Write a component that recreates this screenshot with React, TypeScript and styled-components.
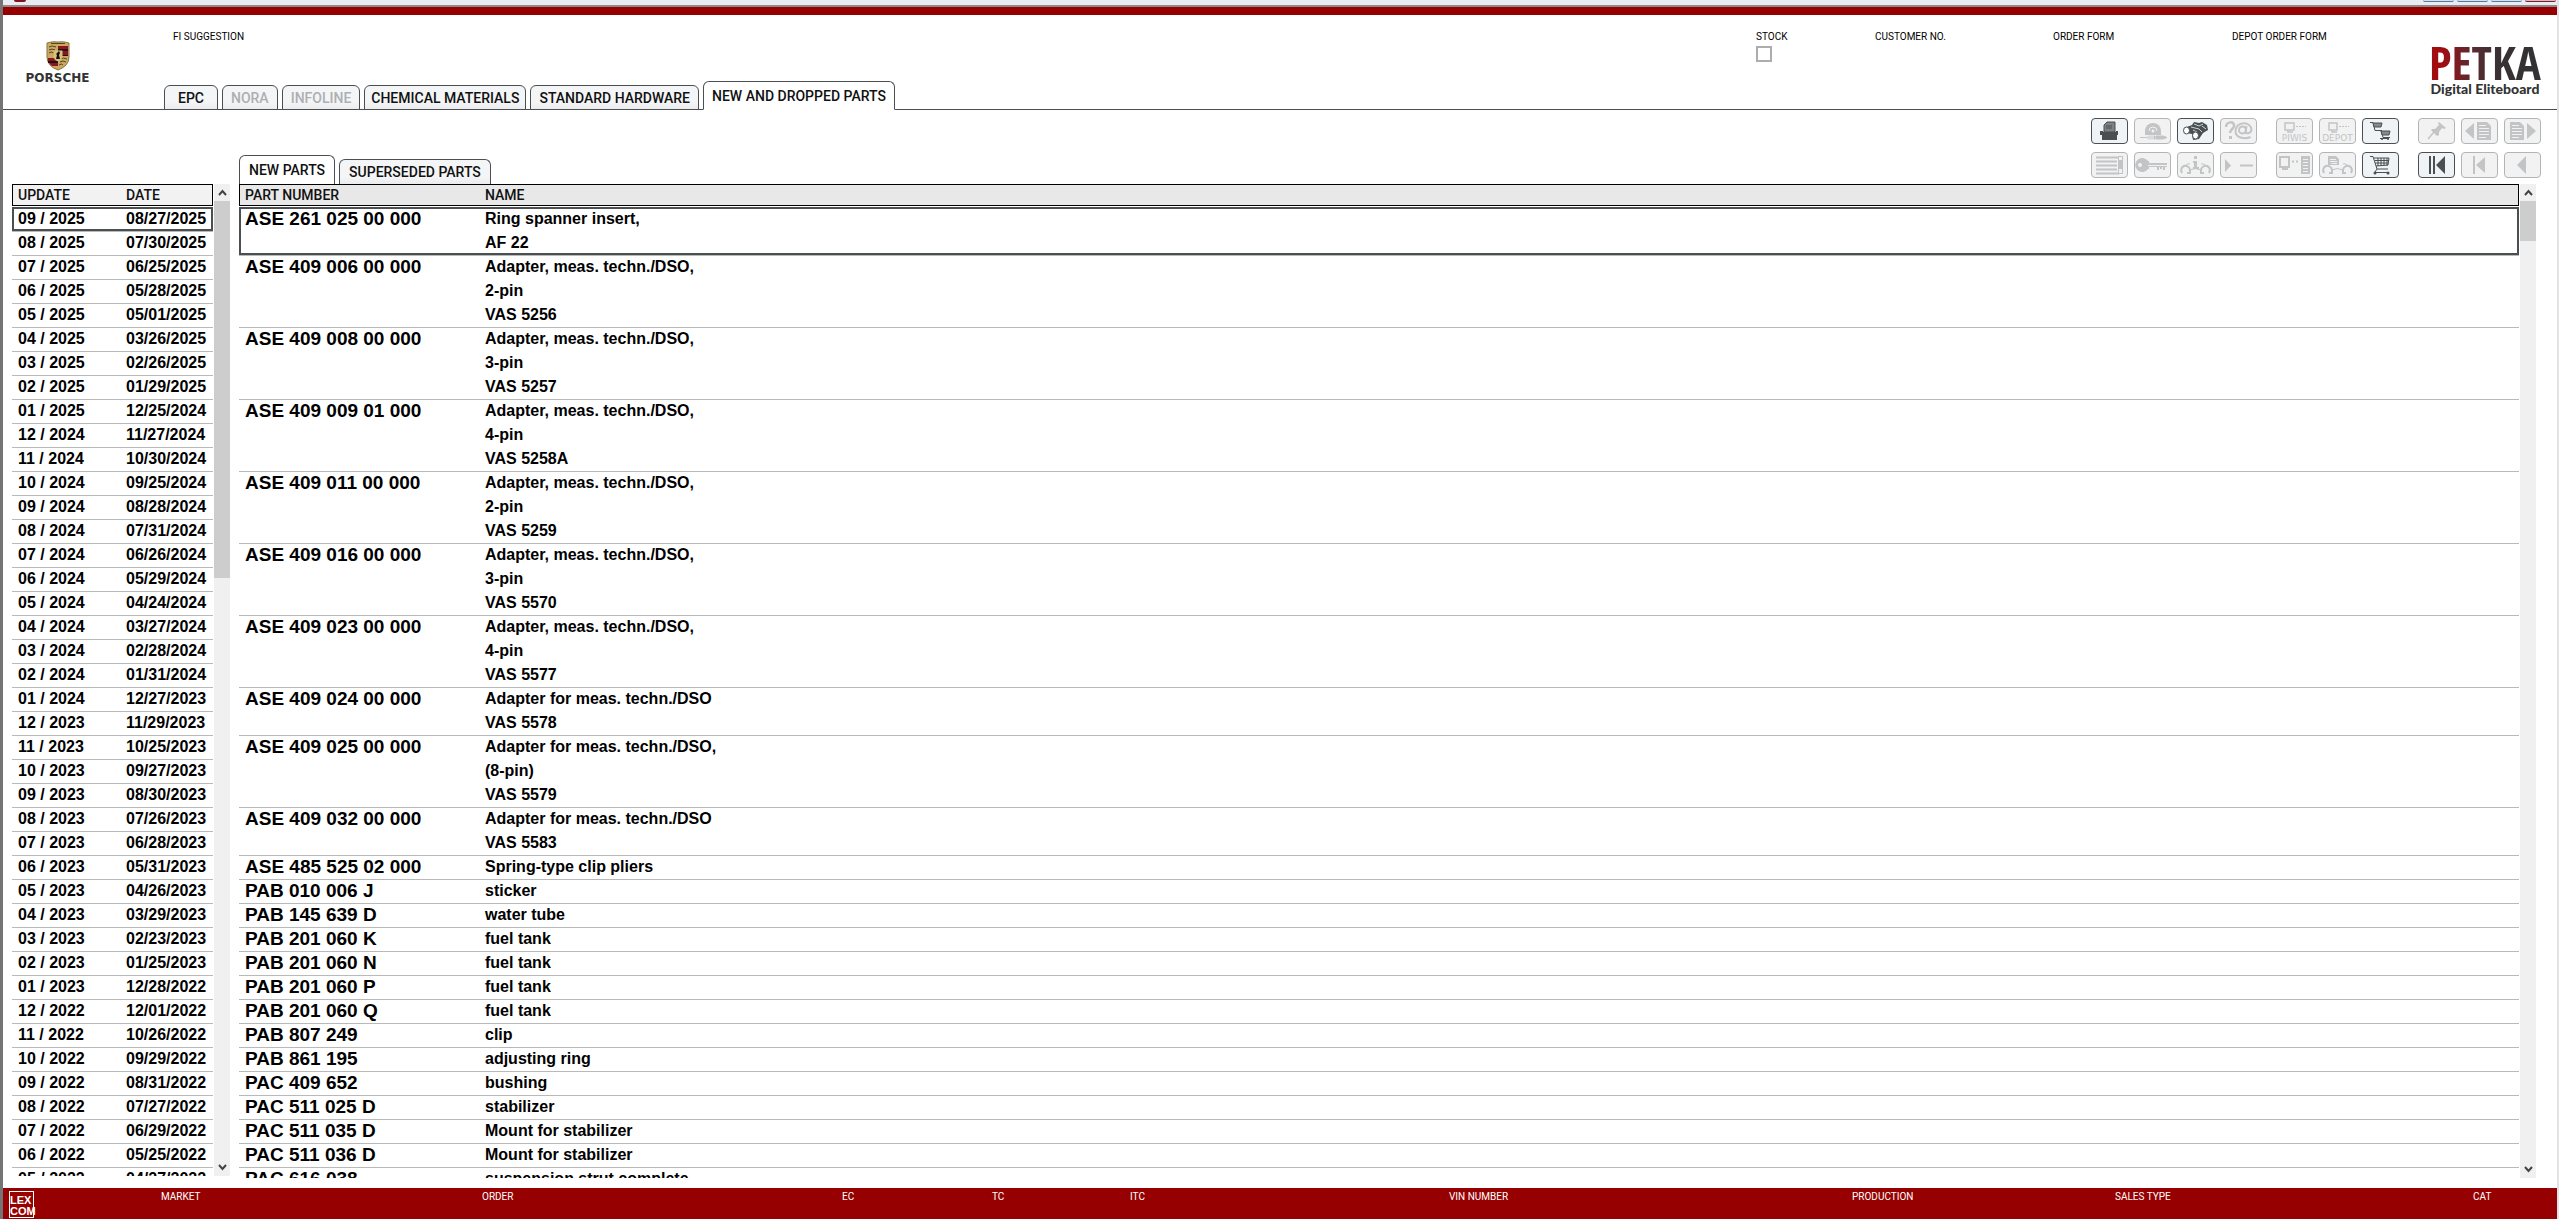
import React from 'react';
import styled, { createGlobalStyle, css } from 'styled-components';

const ink = '#4a4f51';
const pale = '#c2c4c5';
const brand = '#970000';

const GlobalStyle = createGlobalStyle`
  *, *::before, *::after { box-sizing: border-box; }
  body { margin: 0; background: #fff; color: #000; font-family: "Liberation Sans", Arial, sans-serif; }
  button, input { font: inherit; margin: 0; }
`;

const Window = styled.div`
  display: flex;
  flex-direction: column;
  height: 100vh;
  border-left: 3px solid #747474;
  border-right: 2px solid #e2e2e4;
  overflow: hidden;
`;

const TitleBar = styled.div`
  display: flex;
  flex: none;
  align-items: flex-start;
  justify-content: space-between;
  height: 7px;
  padding: 0 1px 0 11px;
  background: #e9ebf2;
  border-bottom: 2px solid #8f8888;
`;

const AppDot = styled.span`
  width: 12px;
  height: 2px;
  border-radius: 0 0 6px 6px;
  background: #7d1420;
`;

const WindowButtons = styled.div`
  display: flex;
  gap: 3px;
`;

const WindowButton = styled.button<{ $close?: boolean }>`
  width: 31px;
  height: 2px;
  padding: 0;
  border: 0;
  border-bottom: 1px solid ${p => (p.$close ? '#6d2430' : '#5c7796')};
  border-radius: 0 0 3px 3px;
  background: ${p => (p.$close ? '#e0b4b8' : '#cfe0f2')};
`;

const Header = styled.header`
  display: flex;
  flex: none;
  height: 103px;
  border-top: 8px solid ${brand};
  border-bottom: 1px solid ${ink};
`;

const BrandMark = styled.div`
  display: flex;
  flex-direction: column;
  align-items: center;
  width: 161px;
  padding: 26px 52px 0 0;
`;

const Wordmark = styled.span`
  font: bold 12px/14px "DejaVu Sans", sans-serif;
  color: #333;
`;

const HeaderMain = styled.div`
  display: flex;
  flex: 1;
  flex-direction: column;
  justify-content: space-between;
`;

const Caption = styled.span`
  font: 10px/12px Roboto, "Liberation Sans", sans-serif;
  white-space: nowrap;
`;

const HeaderCaption = styled(Caption)`
  padding: 16px 0 0 9px;
`;

const TabList = styled.div`
  display: flex;
  align-items: flex-end;
  gap: 4px;
`;

const Tab = styled.button<{ $active?: boolean; $pad?: number }>`
  height: ${p => (p.$active ? 29 : 25)}px;
  margin-bottom: -1px;
  padding: 0 ${p => p.$pad ?? 8}px;
  border: 1px solid ${ink};
  border-bottom-color: ${p => (p.$active ? '#fff' : ink)};
  border-radius: 6px 6px 0 0;
  background: ${p => (p.$active ? '#fff' : 'linear-gradient(#f4f5f6 70%, #ececee)')};
  color: #111;
  font: 500 14px/20px Roboto, "Liberation Sans", sans-serif;
  white-space: nowrap;
  &:disabled { color: #adafb1; }
`;

const Field = styled.label<{ $width: number }>`
  display: flex;
  flex: none;
  flex-direction: column;
  align-items: flex-start;
  gap: 3px;
  width: ${p => p.$width}px;
  padding-top: 16px;
`;

const CheckBox = styled.input`
  appearance: none;
  width: 16px;
  height: 16px;
  border: 2px solid #adadad;
  background: #fff;
`;

const Product = styled.div`
  display: flex;
  flex-direction: column;
  align-items: center;
  width: 110px;
  margin-right: 17px;
  padding-top: 27px;
`;

const ProductName = styled.span`
  background: linear-gradient(90deg, #a00c10 12%, #5a2b30 38%, #3a3133 62%, #303234);
  background-clip: text;
  color: transparent;
  font: bold 47px/40px "Liberation Sans Narrow", "Open Sans Condensed", "Liberation Sans", sans-serif;
`;

const ProductLine = styled.span`
  color: #333;
  font: 900 14px/14px Lato, sans-serif;
  white-space: nowrap;
`;

const Body = styled.main`
  display: flex;
  flex: 1;
  gap: 9px;
  min-height: 0;
  padding: 0 16px 10px 9px;
`;

const Side = styled.section`
  display: flex;
  flex: none;
  width: 218px;
  margin: 74px 0 2px;
`;

const Content = styled.section`
  display: flex;
  flex: 1;
  flex-direction: column;
  min-width: 0;
`;

const ContentTop = styled.div`
  display: flex;
  flex: none;
  align-items: flex-end;
  justify-content: space-between;
  height: 74px;
`;

const SubTabs = styled(TabList)`
  ${Tab} { margin-bottom: 0; border-bottom: 0; }
`;

const Tools = styled.div`
  display: flex;
  gap: 19px;
  padding-bottom: 6px;
`;

const ToolGroup = styled.div<{ $columns: number }>`
  display: grid;
  grid-template-columns: repeat(${p => p.$columns}, 37px);
  gap: 8px 6px;
`;

const ToolButton = styled.button`
  display: flex;
  width: 37px;
  height: 26px;
  padding: 0;
  border: 1px solid ${ink};
  border-radius: 4px;
  background: #f0f3f6;
  color: ${ink};
  svg { display: block; margin: -1px; flex: none; }
  &:disabled { border-color: #b3b4b5; background: #f2f2f3; color: ${pale}; }
`;

const ListRow = styled.div`
  display: flex;
  flex: 1;
  min-height: 0;
  margin-right: 5px;
`;

const Viewport = styled.div`
  flex: 1;
  min-width: 0;
  overflow: hidden;
  margin-right: 1px;
`;

const Table = styled.table`
  width: 100%;
  table-layout: fixed;
  border-collapse: separate;
  border-spacing: 0;
  tbody::before { content: ''; display: block; height: 2px; }
`;

const HeadCell = styled.th<{ $shade: string; $width?: number }>`
  width: ${p => (p.$width ? `${p.$width}px` : 'auto')};
  height: 22px;
  padding: 0 0 0 6px;
  border: solid #000;
  border-width: 1px 0;
  background: ${p => p.$shade};
  color: #111;
  font: 500 14px/20px Roboto, "Liberation Sans", sans-serif;
  text-align: left;
  &:first-child { border-left-width: 1px; padding-left: 5px; }
  &:last-child { border-right-width: 1px; }
`;

const Row = styled.tr<{ $selected?: boolean }>`
  position: relative;
  ${p => p.$selected && css`
    td:first-child::after {
      content: '';
      position: absolute;
      inset: -1px 0 1px 0;
      border: 2px solid ${ink};
    }
  `}
`;

const Cell = styled.td<{ $large?: boolean }>`
  padding: 0 0 0 6px;
  border-bottom: 1px solid #b9b9b9;
  font-size: ${p => (p.$large ? 19 : 16)}px;
  font-weight: bold;
  line-height: ${p => (p.$large ? 22 : 21)}px;
  vertical-align: top;
  white-space: nowrap;
`;

const Line = styled.div`
  height: 24px;
  &:last-child { height: 23px; }
`;

const ScrollTrack = styled.div`
  display: flex;
  flex: none;
  flex-direction: column;
  width: 16px;
  background: #f0f0f0;
`;

const ScrollButton = styled.button`
  display: flex;
  align-items: center;
  justify-content: center;
  height: 17px;
  padding: 0;
  border: 0;
  background: transparent;
  color: #444;
`;

const Thumb = styled.div<{ $height: number }>`
  flex: none;
  height: ${p => p.$height}%;
  background: #cdcdcd;
`;

const Grow = styled.div`
  flex: 1;
`;

const Footer = styled.footer`
  display: grid;
  flex: none;
  grid-template-columns: 158fr 321fr 360fr 150fr 138fr 319fr 403fr 263fr 358fr 84fr;
  height: 31px;
  padding-top: 3px;
  background: ${brand};
  color: #fff;
`;

const FooterLogo = styled.div`
  display: flex;
  flex-direction: column;
  justify-content: flex-end;
  width: 25px;
  height: 27px;
  margin-left: 6px;
  border: 1px solid #fff;
  font: bold 11px/11px "Liberation Sans Narrow", "Liberation Sans", sans-serif;
`;

type GlyphName =
  | 'print' | 'disc' | 'search' | 'contact' | 'list' | 'key' | 'carInfo' | 'play'
  | 'piwis' | 'depot' | 'carts' | 'transfer' | 'carDoc' | 'cart'
  | 'pin' | 'docPrev' | 'docNext' | 'first' | 'previous' | 'back';

const CarFront = () => (
  <g fill="none" stroke="currentColor" strokeWidth="2">
    <path d="M5 21c-2-4 0-6 2-7s6 1 6 4v3h-3M32 21c2-4 0-6-2-7s-6 1-6 4v3h3" />
    <path d="M9 13q2-2 4-1M28 13q-2-2-4-1M13 18q5-3 11 0" strokeWidth="1" />
  </g>
);

const glyphs: Record<GlyphName, React.ReactNode> = {
  print: <>
    <path d="M13 14V7l3-3h8v10z" fill="#7d8284" stroke="currentColor" />
    <path d="M9 13h3v1h13v-1h2v4h-1v5H11v-5H9z" fill="currentColor" />
    <path d="M15 8h6M15 10h6" stroke="#4a4f51" />
  </>,
  disc: <>
    <path d="M11 17v-4a8 8 0 0 1 16 0v4z" fill="currentColor" />
    <path d="M15 13a4 4 0 0 1 8 0" fill="none" stroke="#f2f2f3" />
    <circle cx="19" cy="13" r="1.500" fill="#f2f2f3" />
    <path d="M6 19.500h7M14 18h7v3h-7zM22 18h7l4 1.500-4 1.500h-7z" fill="currentColor" stroke="currentColor" />
    <path d="M15 17v5M17 17v5M19 17v5" stroke="#f2f2f3" />
  </>,
  search: <>
    <path d="M7 10l8-3 2-3 5 1 3-1 5 3 1 5-5 3-4 6-6 1-1-6-6-1z" fill="currentColor" />
    <path d="M17 6l5 2 4-2M14 9l8 2M22 11l3 3M25 8l4 3M16 12l4 2" stroke="#cfd5d8" fill="none" />
    <ellipse cx="9.500" cy="12.500" rx="3" ry="3.500" fill="#fff" stroke="currentColor" />
    <ellipse cx="18.500" cy="17.500" rx="3" ry="3.500" fill="#fff" stroke="currentColor" />
  </>,
  contact: <>
    <path d="M6 9c0-6 9-6 8-1 0 3-4 3-4 7" fill="none" stroke="currentColor" strokeWidth="2.500" />
    <rect x="9" y="18" width="3" height="3" fill="currentColor" />
    <ellipse cx="22.500" cy="12" rx="3.500" ry="3.500" fill="none" stroke="currentColor" strokeWidth="2" />
    <path d="M26.500 8l-1 6c0 2 5 2 6-2 0-9-16-9-16 1 0 8 11 8 15 6" fill="none" stroke="currentColor" strokeWidth="2" />
  </>,
  list: <>
    <path d="M5 5.500h23M5 9.500h21M5 13.500h21M5 17.500h21M5 21.500h23" stroke="currentColor" strokeWidth="2" />
    <rect x="27.500" y="4.500" width="4" height="17" fill="none" stroke="currentColor" />
    <rect x="28" y="8" width="3" height="9" fill="currentColor" />
  </>,
  key: <>
    <path fillRule="evenodd" d="M9 6a7 7 0 1 0 5 11h1v-2h18v-4H15V9h-1a7 7 0 0 0-5-3zM6 11a2 2 0 1 1 0 4 2 2 0 0 1 0-4z" fill="currentColor" />
    <path d="M14 13.500h19" stroke="#f2f2f3" />
    <path d="M24 15v3M27 15v2M30 15v3" stroke="currentColor" strokeWidth="2" />
  </>,
  carInfo: <>
    <CarFront />
    <path d="M17 4h3v3h-3zM16 9h4v6h2v2h-6v-2h1v-4h-1z" fill="currentColor" />
  </>,
  play: <>
    <path d="M5 7l6 6.500L5 20z" fill="currentColor" />
    <path d="M20 13.500h13" stroke="currentColor" strokeWidth="2" />
  </>,
  piwis: <>
    <path d="M9 5h9v7H9zM12 12v2h5" fill="none" stroke="currentColor" strokeWidth="1.500" />
    <path d="M20 8.500h10" stroke="currentColor" strokeDasharray="2 1" />
    <text x="18.500" y="23" textAnchor="middle" fontFamily="DejaVu Sans, sans-serif" fontSize="9" fill="currentColor">PIWIS</text>
  </>,
  depot: <>
    <path d="M10 5h8v7h-8zM13 12v2h5" fill="none" stroke="currentColor" strokeWidth="1.500" />
    <path d="M20 8.500h10" stroke="currentColor" strokeDasharray="2 1" />
    <text x="18.500" y="23" textAnchor="middle" fontFamily="DejaVu Sans, sans-serif" fontSize="9" fill="currentColor">DEPOT</text>
  </>,
  carts: <>
    <path d="M8 4.500h3l2 8h7" fill="none" stroke="currentColor" />
    <path d="M11 5h9l-1 4h-7z" fill="#85898b" stroke="currentColor" />
    <path d="M16 12.500h3l2 7h7M18 20.500h9" fill="none" stroke="currentColor" />
    <path d="M19 13h9l-1 4h-7z" fill="#85898b" stroke="currentColor" />
    <circle cx="20" cy="21" r="1" fill="currentColor" /><circle cx="26" cy="21" r="1" fill="currentColor" />
  </>,
  transfer: <>
    <path d="M4 5h9v10H4zM7 15v2h5" fill="none" stroke="currentColor" strokeWidth="2" />
    <path d="M16 9.500h2M20 9.500h2" stroke="currentColor" strokeWidth="2" />
    <rect x="25" y="4" width="9" height="18" fill="currentColor" />
    <path d="M27 7.500h5M27 10.500h5M27 13.500h5M27 16.500h5M27 19.500h5" stroke="#f2f2f3" />
  </>,
  carDoc: <>
    <path d="M9 4h8l3 3v6H9z" fill="currentColor" />
    <path d="M11 7.500h6M11 9.500h7M11 11.500h7" stroke="#f2f2f3" />
    <CarFront />
  </>,
  cart: <>
    <path d="M8 4.500h3l4 12.500h11M12 6h15l-1 7-12 1M13 8.500h14M13 11h13M16 6v8M19 6v8M22 6v8M25 6v8M12 20.500h15M15 17l-2 3" fill="none" stroke="currentColor" />
    <circle cx="13" cy="21" r="1.500" fill="currentColor" /><circle cx="26" cy="21" r="1.500" fill="currentColor" />
  </>,
  pin: <>
    <path d="M21 4l7 6-2 1-2-1-3 4v3l-2 1-6-6 1-1h3l4-4-1-2z" fill="currentColor" />
    <path d="M16 14l-6 7" stroke="currentColor" strokeWidth="1.500" />
  </>,
  docPrev: <>
    <path d="M13 5v16l-9-8z" fill="currentColor" />
    <path d="M16 4h10l4 4v14H16z" fill="currentColor" />
    <path d="M18 7.500h7M18 10.500h10M18 13.500h10M18 16.500h10M18 19.500h7" stroke="#f2f2f3" />
  </>,
  docNext: <>
    <path d="M23 5v16l9-8z" fill="currentColor" />
    <path d="M6 4h10l4 4v14H6z" fill="currentColor" />
    <path d="M8 7.500h7M8 10.500h10M8 13.500h10M8 16.500h10M8 19.500h7" stroke="#f2f2f3" />
  </>,
  first: <path d="M11 4h2v18h-2zM15 4h2v18h-2zM27 4v18l-9-9z" fill="currentColor" />,
  previous: <path d="M12 4h2v18h-2zM24 5v16l-9-8z" fill="currentColor" />,
  back: <path d="M22 4v18l-9-9z" fill="currentColor" />,
};

interface Tool { glyph: GlyphName; label: string; on?: boolean }

const toolGroups: { columns: number; tools: Tool[] }[] = [
  {
    columns: 4,
    tools: [
      { glyph: 'print', label: 'Print', on: true },
      { glyph: 'disc', label: 'Wear parts' },
      { glyph: 'search', label: 'Search', on: true },
      { glyph: 'contact', label: 'Contact' },
      { glyph: 'list', label: 'List' },
      { glyph: 'key', label: 'Key' },
      { glyph: 'carInfo', label: 'Vehicle information' },
      { glyph: 'play', label: 'Expand' },
    ],
  },
  {
    columns: 3,
    tools: [
      { glyph: 'piwis', label: 'Piwis' },
      { glyph: 'depot', label: 'Depot' },
      { glyph: 'carts', label: 'Order lists', on: true },
      { glyph: 'transfer', label: 'Transfer' },
      { glyph: 'carDoc', label: 'Vehicle document' },
      { glyph: 'cart', label: 'Order list', on: true },
    ],
  },
  {
    columns: 3,
    tools: [
      { glyph: 'pin', label: 'Pin' },
      { glyph: 'docPrev', label: 'Previous page' },
      { glyph: 'docNext', label: 'Next page' },
      { glyph: 'first', label: 'Start', on: true },
      { glyph: 'previous', label: 'First' },
      { glyph: 'back', label: 'Back' },
    ],
  },
];

const updates: [string, string][] = [
  ['09 / 2025', '08/27/2025'], ['08 / 2025', '07/30/2025'], ['07 / 2025', '06/25/2025'],
  ['06 / 2025', '05/28/2025'], ['05 / 2025', '05/01/2025'], ['04 / 2025', '03/26/2025'],
  ['03 / 2025', '02/26/2025'], ['02 / 2025', '01/29/2025'], ['01 / 2025', '12/25/2024'],
  ['12 / 2024', '11/27/2024'], ['11 / 2024', '10/30/2024'], ['10 / 2024', '09/25/2024'],
  ['09 / 2024', '08/28/2024'], ['08 / 2024', '07/31/2024'], ['07 / 2024', '06/26/2024'],
  ['06 / 2024', '05/29/2024'], ['05 / 2024', '04/24/2024'], ['04 / 2024', '03/27/2024'],
  ['03 / 2024', '02/28/2024'], ['02 / 2024', '01/31/2024'], ['01 / 2024', '12/27/2023'],
  ['12 / 2023', '11/29/2023'], ['11 / 2023', '10/25/2023'], ['10 / 2023', '09/27/2023'],
  ['09 / 2023', '08/30/2023'], ['08 / 2023', '07/26/2023'], ['07 / 2023', '06/28/2023'],
  ['06 / 2023', '05/31/2023'], ['05 / 2023', '04/26/2023'], ['04 / 2023', '03/29/2023'],
  ['03 / 2023', '02/23/2023'], ['02 / 2023', '01/25/2023'], ['01 / 2023', '12/28/2022'],
  ['12 / 2022', '12/01/2022'], ['11 / 2022', '10/26/2022'], ['10 / 2022', '09/29/2022'],
  ['09 / 2022', '08/31/2022'], ['08 / 2022', '07/27/2022'], ['07 / 2022', '06/29/2022'],
  ['06 / 2022', '05/25/2022'], ['05 / 2022', '04/27/2022'],
];

const parts: [string, string[]][] = [
  ['ASE 261 025 00 000', ['Ring spanner insert,', 'AF 22']],
  ['ASE 409 006 00 000', ['Adapter, meas. techn./DSO,', '2-pin', 'VAS 5256']],
  ['ASE 409 008 00 000', ['Adapter, meas. techn./DSO,', '3-pin', 'VAS 5257']],
  ['ASE 409 009 01 000', ['Adapter, meas. techn./DSO,', '4-pin', 'VAS 5258A']],
  ['ASE 409 011 00 000', ['Adapter, meas. techn./DSO,', '2-pin', 'VAS 5259']],
  ['ASE 409 016 00 000', ['Adapter, meas. techn./DSO,', '3-pin', 'VAS 5570']],
  ['ASE 409 023 00 000', ['Adapter, meas. techn./DSO,', '4-pin', 'VAS 5577']],
  ['ASE 409 024 00 000', ['Adapter for meas. techn./DSO', 'VAS 5578']],
  ['ASE 409 025 00 000', ['Adapter for meas. techn./DSO,', '(8-pin)', 'VAS 5579']],
  ['ASE 409 032 00 000', ['Adapter for meas. techn./DSO', 'VAS 5583']],
  ['ASE 485 525 02 000', ['Spring-type clip pliers']],
  ['PAB 010 006 J', ['sticker']],
  ['PAB 145 639 D', ['water tube']],
  ['PAB 201 060 K', ['fuel tank']],
  ['PAB 201 060 N', ['fuel tank']],
  ['PAB 201 060 P', ['fuel tank']],
  ['PAB 201 060 Q', ['fuel tank']],
  ['PAB 807 249', ['clip']],
  ['PAB 861 195', ['adjusting ring']],
  ['PAC 409 652', ['bushing']],
  ['PAC 511 025 D', ['stabilizer']],
  ['PAC 511 035 D', ['Mount for stabilizer']],
  ['PAC 511 036 D', ['Mount for stabilizer']],
  ['PAC 616 038', ['suspension strut complete']],
];

const footerFields = ['MARKET', 'ORDER', 'EC', 'TC', 'ITC', 'VIN NUMBER', 'PRODUCTION', 'SALES TYPE', 'CAT'];

const Crest = () => (
  <svg width="24" height="30" viewBox="0 0 24 30" aria-hidden="true">
    <path d="M1 2q5.500-2 11-1 5.500-1 11 1v14q0 9-11 13Q1 25 1 16z" fill="#c9aa62" stroke="#8a7340" />
    <path d="M12 5h10v3H12zM12 10h10v4H12zM2 17h10v3H2zM3 22h9v3H6z" fill="#8f1420" />
    <path d="M12 8h10v2H12zM2 20h10v2H2zM12 14h10v1H12z" fill="#1c1717" />
    <path d="M3 6q3-2 7 0M3 9q3-2 6 0M3 12q2-2 5 0M14 18q3-2 7 0M14 21q3-2 6 0M13 24q3-2 4 0M5 2.500h14" stroke="#55401f" fill="none" />
    <path d="M7.500 9.500h9v7q-1 3-4.500 4-3.500-1-4.500-4z" fill="#d9c07c" />
    <path d="M10 18l1-4-1-1 3-3 1 2-1 2 1 4z" fill="#111" />
  </svg>
);

const Chevron = ({ down }: { down?: boolean }) => (
  <svg width="9" height="7" viewBox="0 0 9 7" aria-hidden="true">
    <path d={down ? 'M1 1l3.500 4L8 1' : 'M1 6l3.500-4L8 6'} fill="none" stroke="currentColor" strokeWidth="2" />
  </svg>
);

const ScrollBar = ({ thumb }: { thumb: number }) => (
  <ScrollTrack>
    <ScrollButton aria-label="Scroll up"><Chevron /></ScrollButton>
    <Thumb $height={thumb} />
    <Grow />
    <ScrollButton aria-label="Scroll down"><Chevron down /></ScrollButton>
  </ScrollTrack>
);

export default function App() {
  return (
    <Window>
      <GlobalStyle />
      <TitleBar>
        <AppDot />
        <WindowButtons>
          <WindowButton aria-label="Help" />
          <WindowButton aria-label="Minimize" />
          <WindowButton aria-label="Maximize" />
          <WindowButton aria-label="Close" $close />
        </WindowButtons>
      </TitleBar>

      <Header>
        <BrandMark>
          <Crest />
          <Wordmark>PORSCHE</Wordmark>
        </BrandMark>
        <HeaderMain>
          <HeaderCaption>FI SUGGESTION</HeaderCaption>
          <TabList>
            <Tab $pad={13}>EPC</Tab>
            <Tab disabled>NORA</Tab>
            <Tab disabled>INFOLINE</Tab>
            <Tab $pad={6}>CHEMICAL MATERIALS</Tab>
            <Tab>STANDARD HARDWARE</Tab>
            <Tab $active>NEW AND DROPPED PARTS</Tab>
          </TabList>
        </HeaderMain>
        <Field $width={119}>
          <Caption>STOCK</Caption>
          <CheckBox type="checkbox" />
        </Field>
        <Field as="div" $width={178}><Caption>CUSTOMER NO.</Caption></Field>
        <Field as="div" $width={179}><Caption>ORDER FORM</Caption></Field>
        <Field as="div" $width={198}><Caption>DEPOT ORDER FORM</Caption></Field>
        <Product>
          <ProductName>PETKA</ProductName>
          <ProductLine>Digital Eliteboard</ProductLine>
        </Product>
      </Header>

      <Body>
        <Side>
          <Viewport>
            <Table>
              <thead>
                <tr>
                  <HeadCell $shade="#f2f2f2" $width={108}>UPDATE</HeadCell>
                  <HeadCell $shade="#f2f2f2">DATE</HeadCell>
                </tr>
              </thead>
              <tbody>
                {updates.map(([update, date], i) => (
                  <Row key={update} $selected={i === 0}>
                    <Cell><Line>{update}</Line></Cell>
                    <Cell><Line>{date}</Line></Cell>
                  </Row>
                ))}
              </tbody>
            </Table>
          </Viewport>
          <ScrollBar thumb={38} />
        </Side>

        <Content>
          <ContentTop>
            <SubTabs>
              <Tab $active $pad={9}>NEW PARTS</Tab>
              <Tab $pad={9}>SUPERSEDED PARTS</Tab>
            </SubTabs>
            <Tools>
              {toolGroups.map((group, i) => (
                <ToolGroup key={i} $columns={group.columns}>
                  {group.tools.map(tool => (
                    <ToolButton key={tool.glyph} disabled={!tool.on} aria-label={tool.label}>
                      <svg width="37" height="26" viewBox="0 0 37 26" aria-hidden="true">{glyphs[tool.glyph]}</svg>
                    </ToolButton>
                  ))}
                </ToolGroup>
              ))}
            </Tools>
          </ContentTop>
          <ListRow>
            <Viewport>
              <Table>
                <thead>
                  <tr>
                    <HeadCell $shade="#e8e8e8" $width={240}>PART NUMBER</HeadCell>
                    <HeadCell $shade="#e8e8e8">NAME</HeadCell>
                  </tr>
                </thead>
                <tbody>
                  {parts.map(([number, name], i) => (
                    <Row key={number} $selected={i === 0}>
                      <Cell $large>{number}</Cell>
                      <Cell>{name.map(line => <Line key={line}>{line}</Line>)}</Cell>
                    </Row>
                  ))}
                </tbody>
              </Table>
            </Viewport>
            <ScrollBar thumb={4} />
          </ListRow>
        </Content>
      </Body>

      <Footer>
        <FooterLogo><span>LEX</span><span>COM</span></FooterLogo>
        {footerFields.map(field => <Caption key={field}>{field}</Caption>)}
      </Footer>
    </Window>
  );
}
